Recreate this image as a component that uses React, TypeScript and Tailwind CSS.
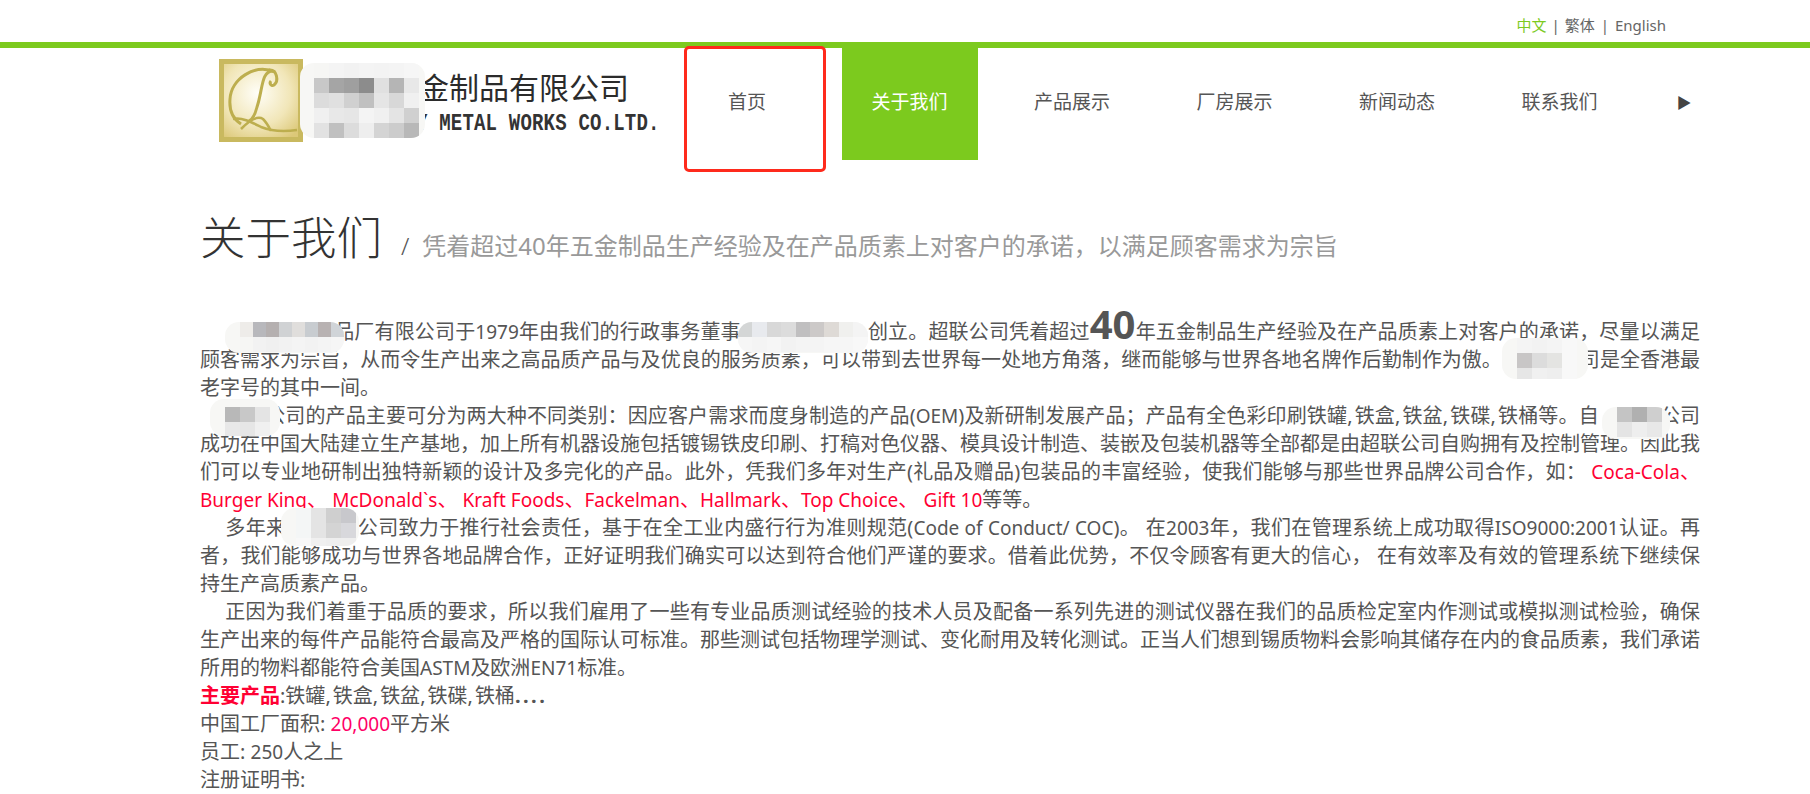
const cjk = '"Noto Sans","Noto Sans CJK SC",sans-serif'

const navItems = ['首页', '关于我们', '产品展示', '厂房展示', '新闻动态', '联系我们']

type Cells = string[][]

function Mosaic({ cells, className }: { cells: Cells; className: string }) {
  return (
    <span className={`absolute z-10 block overflow-hidden rounded-[14px] bg-[#f7f7f5] ${className}`}>
      <span className="flex flex-col">
        {cells.map((row, i) => (
          <span key={i} className="flex">
            {row.map((c, j) => (
              <span key={j} className="block h-[15px] w-[15px]" style={{ background: c }} />
            ))}
          </span>
        ))}
      </span>
    </span>
  )
}

function Hidden({ w, cells, className }: { w: string; cells: Cells; className: string }) {
  return (
    <span className={`relative inline-block h-[1em] align-baseline ${w}`}>
      <Mosaic cells={cells} className={className} />
    </span>
  )
}

// latin runs sit a bit narrower than the cjk text
function L({ children }: { children: React.ReactNode }) {
  return <span className="text-[19px]">{children}</span>
}

function Comma() {
  return <span className="mr-[2px]">,</span>
}

function Logo() {
  return (
    <div className="relative h-[112px] w-[479px] shrink-0">
      <svg className="absolute left-[19px] top-[11px]" width="86" height="85" viewBox="0 0 86 85">
        <defs>
          <radialGradient id="gold" cx="0.45" cy="0.4" r="0.75">
            <stop offset="0" stopColor="#fffef8" />
            <stop offset="0.6" stopColor="#f1e6b8" />
            <stop offset="1" stopColor="#dcc878" />
          </radialGradient>
        </defs>
        <rect x="0" y="0" width="84" height="83" fill="#c9b95f" />
        <rect x="5" y="5" width="74" height="73" fill="url(#gold)" />
        <g fill="none" stroke="#bdae4e" strokeWidth="3">
          <path d="M56 13C36 4 12 20 11 40c-1 12 3 20 11 25" />
          <path d="M54 12C42 12 44 30 38 48c-2 8-4 12-8 14" />
          <path d="M50 11c8-1 10 11 5 15-3 2-5-2-3-4" />
          <path d="M14 60c10-2 20 4 28 8 10 4 22 5 36 3" strokeWidth="2.5" />
          <path d="M22 70c8-8 16-14 22-10 4 4 6 8 8 12" strokeWidth="2.5" />
        </g>
      </svg>
      <div className="absolute left-[219px] top-[20px] font-['Noto_Sans_CJK_SC'] text-[30px] leading-[36px] whitespace-nowrap text-[#2b2b2b]">
        金制品有限公司
      </div>
      <div className="absolute left-[216px] top-[62px] origin-left scale-y-125 font-['Liberation_Mono'] text-[19px] leading-[28px] font-bold tracking-[0.2px] whitespace-nowrap text-[#333]">
        Y METAL WORKS CO.LTD.
      </div>
      <Mosaic
        className="left-[100px] top-[15px] h-[75px] w-[125px] pl-[14px]"
        cells={[
          ['#f6f6f4', '#f4f4f4', '#f2f2f2', '#f4f4f4', '#f3f3f3', '#f4f4f4', '#f6f6f6'],
          ['#c8c8c8', '#a5a5a5', '#9f9f9f', '#8c8c8c', '#e0e0e0', '#b5b5b5', '#e8e8e8'],
          ['#dcdcdc', '#e0e0e0', '#d0d0d0', '#c0c0c0', '#e5e5e5', '#d8d8d8', '#f0f0f0'],
          ['#f0f0f0', '#e8e8e8', '#e6e6e6', '#f4f4f4', '#f0f0f0', '#e4e4e4', '#d0d0d0'],
          ['#e2e2e2', '#c0c0c0', '#dcdcdc', '#eeeeee', '#d4d4d4', '#cccccc', '#b8b8b8'],
        ]}
      />
    </div>
  )
}

export default function App() {
  return (
    <div className="h-[794px] overflow-hidden bg-white text-[#555]" style={{ fontFamily: cjk }}>
      <div className="flex h-[42px] items-center justify-end pt-[8px] pr-[144px] text-[15px] text-[#666]">
        <span className="text-[#7cca1e]">中文</span>
        <span className="mx-[5px]">|</span>
        <span>繁体</span>
        <span className="mx-[6px]">|</span>
        <span>English</span>
      </div>
      <div className="h-[6px] bg-[#7cca1e]" />

      <div className="relative ml-[200px] w-[1500px]">
        <div className="flex">
          <Logo />
          {navItems.map((item) => (
            <div
              key={item}
              className={`mr-[26.5px] flex h-[112px] w-[136px] shrink-0 items-center justify-center pb-1 text-[19px] ${
                item === '关于我们' ? 'bg-[#7cca1e] text-white' : 'text-[#555]'
              }`}
            >
              {item}
            </div>
          ))}
          <div className="flex h-[112px] w-[60px] shrink-0 items-center justify-center pb-1 text-[15px] text-[#444]">▶</div>
        </div>
        <div className="absolute top-[-2px] left-[484px] h-[126px] w-[142px] rounded-[5px] border-[3px] border-[#fe2a1c]" />

        <div className="mt-[45px] flex items-baseline">
          <h1 className="text-[45.5px] leading-[64px] font-light text-[#333]">关于我们</h1>
          <span className="ml-[19px] text-[24px] font-light text-[#555]">/</span>
          <span className="ml-[13px] text-[24px] text-[#999]">
            凭着超过40年五金制品生产经验及在产品质素上对客户的承诺，以满足顾客需求为宗旨
          </span>
        </div>

        <div className="mt-[35px] text-justify text-[20px] leading-[28px]">
          <p>
            <span className="inline-block w-[25px]" />
            <Hidden
              w="w-[109px]"
              className="top-[3px] left-0 h-[31px] w-[119px] pl-[15px]"
              cells={[['#eeece9', '#b8b8bc', '#b5b0b0', '#d0d2d4', '#e0dedc', '#c8ccd0', '#b8b2b2', '#d0d4d8'], ['#f6f6f4', '#f2f2f2', '#f0f0f0', '#f2f2f2', '#f4f4f4', '#f2f2f2', '#f4f4f4', '#f6f6f6']]}
            />
            品厂有限公司于<L>1979</L>年由我们的行政事务董事
            <Hidden
              w="w-[127px]"
              className="top-[3px] left-[-3px] h-[31px] w-[130px]"
              cells={[['#d4d6d6', '#e8eaee', '#d8d8d8', '#dcdcdc', '#c0bfc0', '#ccc9c8', '#dedad6', '#f0f0ee', '#f4f4f4'], ['#f6f6f6', '#f4f4f4', '#f6f6f6', '#f2f2f2', '#f4f4f4', '#f4f4f4', '#f6f6f6', '#f6f6f6', '#f8f8f8']]}
            />
            创立。超联公司凭着超过<b className="text-[40px] leading-[40px] font-bold">40</b>
            年五金制品生产经验及在产品质素上对客户的承诺，尽量以满足顾客需求为宗旨，从而令生产出来之高品质产品与及优良的服务质素，可以带到去世界每一处地方角落，继而能够与世界各地名牌作后勤制作为傲。
            <Hidden
              w="w-[78px]"
              className="top-[-9px] left-0 h-[41px] w-[86px] pl-[15px]"
              cells={[['#f4f4f4', '#f2f2f2', '#f4f4f4', '#f8f8f8'], ['#c8c6c6', '#dcdcdc', '#e4e4e2', '#f8f8f8'], ['#e6e6e6', '#f0f0f0', '#eeeeee', '#f8f8f8']]}
            />
            司是全香港最老字号的其中一间。
          </p>
          <p>
            <span className="inline-block w-[25px]" />
            <Hidden
              w="w-[40px]"
              className="top-[-4px] left-[-15px] h-[37px] w-[70px] pt-[8px] pl-[15px]"
              cells={[['#b8b8b8', '#c8c8c8', '#e4e4e4'], ['#e8e8e8', '#e6e6e6', '#f0f0f0']]}
            />
            公司的产品主要可分为两大种不同类别：因应客户需求而度身制造的产品(<L>OEM</L>)及新研制发展产品；产品有全色彩印刷铁罐<Comma />铁盒<Comma />铁盆<Comma />铁碟<Comma />铁桶等。自
            <Hidden
              w="w-[61px]"
              className="top-[4px] left-[3px] h-[32px] w-[68px] pl-[15px]"
              cells={[['#c4c4c4', '#b0b0b0', '#cfcfcf'], ['#e4e4e4', '#eeeeee', '#e8e8e8']]}
            />
            公司成功在中国大陆建立生产基地，加上所有机器设施包括镀锡铁皮印刷、打稿对色仪器、模具设计制造、装嵌及包装机器等全部都是由超联公司自购拥有及控制管理。因此我们可以专业地研制出独特新颖的设计及多完化的产品。此外，凭我们多年对生产(礼品及赠品)包装品的丰富经验，使我们能够与那些世界品牌公司合作，如：
            <span className="text-[#ff0033]">
              {' '}<L>Coca-Cola</L>、<L>Burger King</L>、 <L>McDonald`s</L>、 <L>Kraft Foods</L>、<L>Fackelman</L>、<L>Hallmark</L>、<L>Top Choice</L>、 <L>Gift 10</L>
            </span>
            等等。
          </p>
          <p>
            <span className="inline-block w-[25px]" />
            多年来
            <Hidden
              w="w-[71px]"
              className="top-[-7px] left-[-5px] h-[38px] w-[78px] pl-[15px]"
              cells={[['#f4f6f6', '#e4e4e4', '#cfcfcf', '#c8c8cc'], ['#f4f6f6', '#e4e4e4', '#d4d4d4', '#d8d8dc'], ['#f8f8f8', '#f0f0f0', '#eeeeee', '#eeeeee']]}
            />
            公司致力于推行社会责任，基于在全工业内盛行行为准则规范(<L>Code of Conduct/ COC</L>)。 在<L>2003</L>年，我们在管理系统上成功取得<L>ISO9000:2001</L>认证。再者，我们能够成功与世界各地品牌合作，正好证明我们确实可以达到符合他们严谨的要求。借着此优势，不仅令顾客有更大的信心， 在有效率及有效的管理系统下继续保持生产高质素产品。
          </p>
          <p>
            <span className="inline-block w-[25px]" />
            正因为我们着重于品质的要求，所以我们雇用了一些有专业品质测试经验的技术人员及配备一系列先进的测试仪器在我们的品质检定室内作测试或模拟测试检验，确保生产出来的每件产品能符合最高及严格的国际认可标准。那些测试包括物理学测试、变化耐用及转化测试。正当人们想到锡质物料会影响其储存在内的食品质素，我们承诺所用的物料都能符合美国<L>ASTM</L>及欧洲<L>EN71</L>标准。
          </p>
          <p>
            <b className="font-bold text-[#ff0033]">主要产品</b>:铁罐<Comma />铁盒<Comma />铁盆<Comma />铁碟<Comma />铁桶<span className="font-bold tracking-[2.5px]">....</span>
          </p>
          <p>
            中国工厂面积: <span className="text-[#ff0066]"><L>20,000</L></span>平方米
          </p>
          <p>员工: <L>250</L>人之上</p>
          <p>注册证明书:</p>
        </div>
      </div>
    </div>
  )
}
